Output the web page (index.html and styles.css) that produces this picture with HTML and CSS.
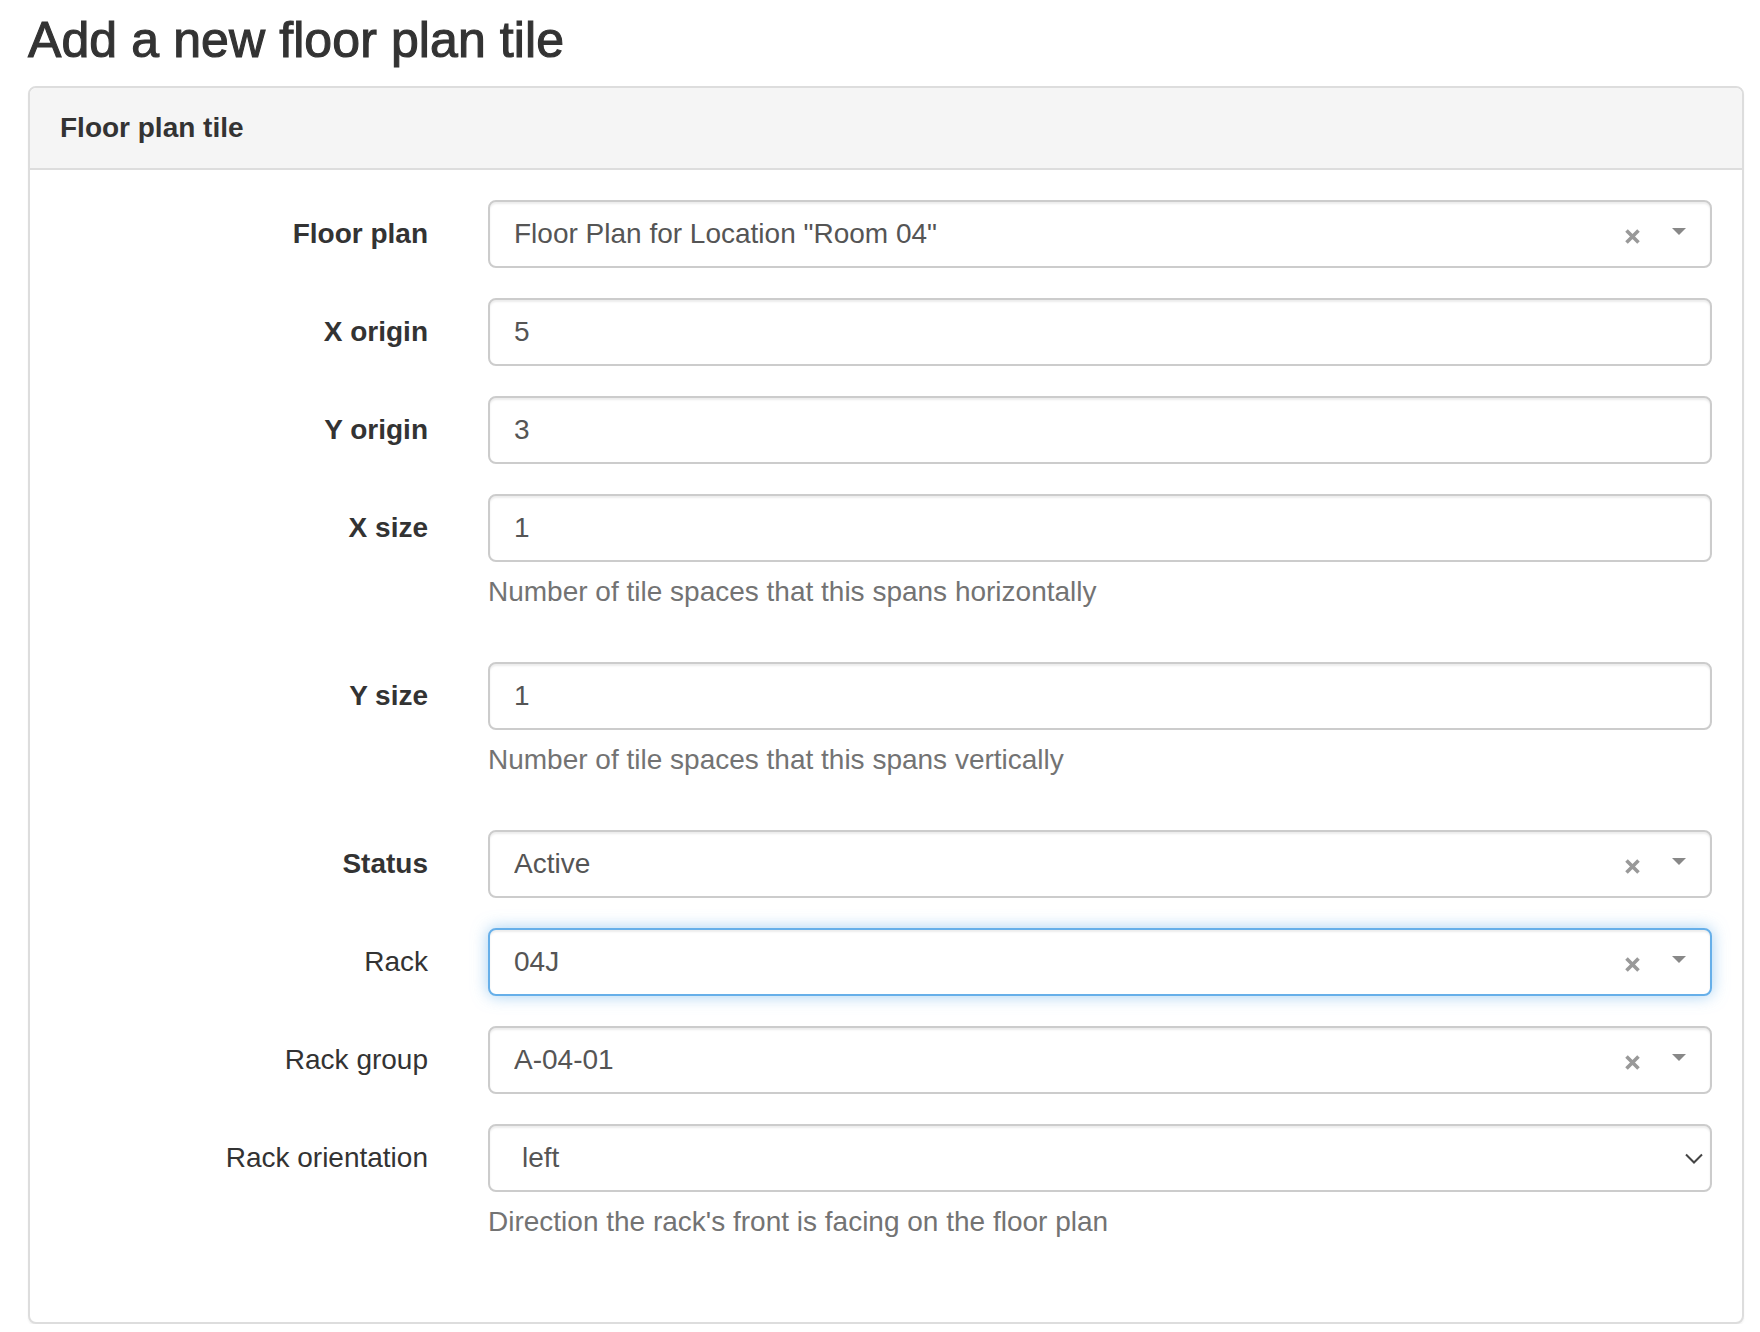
FILE: index.html
```html
<!DOCTYPE html>
<html lang="en">
<head>
<meta charset="utf-8">
<title>Add a new floor plan tile</title>
<link rel="stylesheet" href="styles.css">
</head>
<body>
<div class="page">
  <h1 class="title">Add a new floor plan tile</h1>
  <div class="panel">
    <div class="panel-heading">Floor plan tile</div>
    <div class="panel-body">
      <div class="form-group">
        <label class="control-label required">Floor plan</label>
        <div class="field">
          <div class="select2">
            <span class="select2-value">Floor Plan for Location "Room 04"</span>
            <span class="select2-clear"><svg width="15" height="15" viewBox="0 0 15 15"><path d="M1.5 1.5 L13.5 13.5 M13.5 1.5 L1.5 13.5" stroke="#999" stroke-width="3.6"/></svg></span>
            <span class="select2-arrow"></span>
          </div>
        </div>
      </div>
      <div class="form-group">
        <label class="control-label required">X origin</label>
        <div class="field"><div class="form-control">5</div></div>
      </div>
      <div class="form-group">
        <label class="control-label required">Y origin</label>
        <div class="field"><div class="form-control">3</div></div>
      </div>
      <div class="form-group">
        <label class="control-label required">X size</label>
        <div class="field">
          <div class="form-control">1</div>
          <p class="help-block">Number of tile spaces that this spans horizontally</p>
        </div>
      </div>
      <div class="form-group">
        <label class="control-label required">Y size</label>
        <div class="field">
          <div class="form-control">1</div>
          <p class="help-block">Number of tile spaces that this spans vertically</p>
        </div>
      </div>
      <div class="form-group">
        <label class="control-label required">Status</label>
        <div class="field">
          <div class="select2">
            <span class="select2-value">Active</span>
            <span class="select2-clear"><svg width="15" height="15" viewBox="0 0 15 15"><path d="M1.5 1.5 L13.5 13.5 M13.5 1.5 L1.5 13.5" stroke="#999" stroke-width="3.6"/></svg></span>
            <span class="select2-arrow"></span>
          </div>
        </div>
      </div>
      <div class="form-group">
        <label class="control-label">Rack</label>
        <div class="field">
          <div class="select2 focused">
            <span class="select2-value">04J</span>
            <span class="select2-clear"><svg width="15" height="15" viewBox="0 0 15 15"><path d="M1.5 1.5 L13.5 13.5 M13.5 1.5 L1.5 13.5" stroke="#999" stroke-width="3.6"/></svg></span>
            <span class="select2-arrow"></span>
          </div>
        </div>
      </div>
      <div class="form-group">
        <label class="control-label">Rack group</label>
        <div class="field">
          <div class="select2">
            <span class="select2-value">A-04-01</span>
            <span class="select2-clear"><svg width="15" height="15" viewBox="0 0 15 15"><path d="M1.5 1.5 L13.5 13.5 M13.5 1.5 L1.5 13.5" stroke="#999" stroke-width="3.6"/></svg></span>
            <span class="select2-arrow"></span>
          </div>
        </div>
      </div>
      <div class="form-group">
        <label class="control-label">Rack orientation</label>
        <div class="field">
          <div class="native-select">
            <span class="native-value">left</span>
            <svg class="chevron" width="18" height="11" viewBox="0 0 18 11"><path d="M1 1.5 L9 9.5 L17 1.5" fill="none" stroke="#444" stroke-width="2"/></svg>
          </div>
          <p class="help-block">Direction the rack's front is facing on the floor plan</p>
        </div>
      </div>
    </div>
  </div>
</div>
</body>
</html>
```

FILE: styles.css
```css
html, body {
  margin: 0;
  padding: 0;
  background: #fff;
}

body {
  font-family: "Liberation Sans", Arial, sans-serif;
  font-size: 28px;
  line-height: 40px;
  color: #333;
}

.page {
  padding: 0 16px 0 28px;
}

.title {
  margin: 0 0 16px 0;
  padding-top: 10px;
  font-size: 50px;
  line-height: 60px;
  font-weight: 500;
  letter-spacing: 0.1px;
  color: #333;
  -webkit-text-stroke: 1.1px #333;
}

.panel {
  border: 2px solid #ddd;
  border-radius: 8px;
  background: #fff;
  box-shadow: 0 2px 2px rgba(0, 0, 0, 0.05);
}

.panel-heading {
  background: #f5f5f5;
  border-bottom: 2px solid #ddd;
  border-radius: 6px 6px 0 0;
  padding: 20px 30px;
  font-weight: bold;
  font-size: 28px;
  line-height: 40px;
  color: #333;
}

.panel-body {
  padding: 30px 0;
}

.form-group {
  display: grid;
  grid-template-columns: 25% 75%;
  margin-bottom: 30px;
}

.control-label {
  padding: 14px 30px 0 30px;
  text-align: right;
  line-height: 40px;
  font-weight: normal;
  color: #333;
}

.control-label.required {
  font-weight: bold;
}

.field {
  padding: 0 30px;
  min-width: 0;
}

.form-control {
  box-sizing: border-box;
  height: 68px;
  padding: 12px 24px;
  border: 2px solid #ccc;
  border-radius: 8px;
  background: #fff;
  color: #555;
  line-height: 40px;
  box-shadow: inset 0 2px 2px rgba(0, 0, 0, 0.075);
}

.select2 {
  box-sizing: border-box;
  height: 68px;
  display: flex;
  align-items: center;
  padding: 0 24px;
  border: 2px solid #ccc;
  border-radius: 8px;
  background: #fff;
  color: #555;
  box-shadow: inset 0 2px 2px rgba(0, 0, 0, 0.075);
}

.select2.focused {
  border-color: #66afe9;
  box-shadow: inset 0 2px 2px rgba(0, 0, 0, 0.075), 0 0 16px rgba(102, 175, 233, 0.6);
}

.select2-value {
  flex: 1;
  line-height: 40px;
  white-space: nowrap;
  overflow: hidden;
}

.select2-clear {
  display: flex;
  width: 15px;
  height: 15px;
  margin-top: 4px;
  margin-right: 32px;
}

.select2-arrow {
  width: 0;
  height: 0;
  border-style: solid;
  border-width: 7px 7px 0 7px;
  border-color: #888 transparent transparent transparent;
  margin-top: -6px;
}

.native-select {
  box-sizing: border-box;
  height: 68px;
  display: flex;
  align-items: center;
  padding: 0 6px 0 32px;
  border: 2px solid #ccc;
  border-radius: 8px;
  background: #fff;
  color: #555;
  box-shadow: inset 0 2px 2px rgba(0, 0, 0, 0.075);
}

.native-value {
  flex: 1;
  line-height: 40px;
}

.chevron {
  margin-right: 1px;
}

.help-block {
  margin: 10px 0 20px 0;
  line-height: 40px;
  color: #737373;
}
```
